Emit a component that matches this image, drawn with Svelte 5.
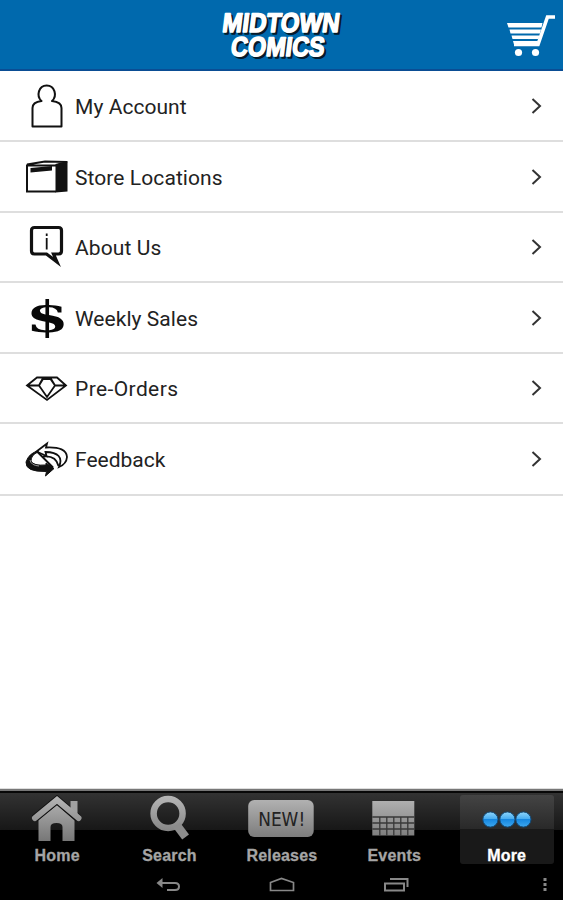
<script>
  const rows = [
    { label: 'My Account', icon: 'account', top: 71, h: 71, ls: 0.05 },
    { label: 'Store Locations', icon: 'store', top: 142, h: 71, ls: 0.08 },
    { label: 'About Us', icon: 'about', top: 213, h: 70, ls: 0.1 },
    { label: 'Weekly Sales', icon: 'sales', top: 283, h: 71, ls: 0.05 },
    { label: 'Pre-Orders', icon: 'orders', top: 353, h: 70, ls: 0.4 },
    { label: 'Feedback', icon: 'feedback', top: 424, h: 72, ls: 0 }
  ];
  const tabs = ['Home', 'Search', 'Releases', 'Events', 'More'];
</script>

<div class="screen">
  <header>
    <svg class="logo" width="200" height="69" viewBox="180 0 200 69" role="img" aria-label="Midtown Comics">
      <g class="shadow">
        <text transform="translate(223.500 33.500) skewX(-7) scale(.89 1)">MIDTOWN</text>
        <text transform="translate(232 57.500) skewX(-7) scale(.868 1)">COMICS</text>
      </g>
      <g class="face">
        <text transform="translate(221.500 32) skewX(-7) scale(.89 1)">MIDTOWN</text>
        <text transform="translate(230 56) skewX(-7) scale(.868 1)">COMICS</text>
      </g>
    </svg>
    <svg class="cart" width="73" height="69" viewBox="490 0 73 69">
      <g fill="#fff">
        <path d="M507 23h35.5l-1 4.5h-33zM509.5 29.5h31.500l-1 4h-29.500zM511.500 35.500h28l-1 3.500h-26zM513 41h25l-1 3.500h-23z" />
        <circle cx="518.500" cy="52.500" r="3.600" /><circle cx="535.500" cy="52.500" r="3.600" />
      </g>
      <path d="M555 17h-7.500L538 44.500H514" fill="none" stroke="#fff" stroke-width="3.600" />
    </svg>
  </header>

  <main>
    {#each rows as r}
      <div class="row" style:height="{r.h}px">
        <svg width="48" height="70" viewBox="22 {r.top} 48 70" fill="none" stroke="#111">
          {#if r.icon === 'account'}
            <path d="M41.500 101C36 96 38.500 85.500 46.700 85.500S57.500 96 52 101Q61.500 102 61.500 108V126.500H32.500V108Q32.500 102 41.500 101z" stroke-width="2" stroke-linejoin="round" />
          {:else if r.icon === 'store'}
            <path d="M27 164.500 45 161.500 67 162 56 165.500H27V191.500H56" stroke-width="2" />
            <path d="M55.500 164 67.500 161V191.500L55.500 192.500zM30.500 168 52 166V170.500L30.500 172.500z" fill="#111" stroke="none" />
          {:else if r.icon === 'about'}
            <path d="M34.500 228.500H58.500Q61.500 228.500 61.500 231.500V252Q61.500 255 58.500 255H53.500L57 263 46.500 255H34.500Q31.500 255 31.500 252V231.500Q31.500 228.500 34.500 228.500z" stroke-width="3.200" />
            <path d="M46.700 239V250.500M46.700 234.500V237" stroke-width="1.800" />
          {:else if r.icon === 'sales'}
            <text class="dollar" transform="translate(26 332) scale(1.430 1)">$</text>
          {:else if r.icon === 'orders'}
            <path d="M37 377.500H57L66 385.500 47 400 27 385.500zM27 385.500H39L43 378M66 385.500H55L50.500 378M39 385.500 47 397 55 385.500 50.500 379H43z" stroke-width="1.800" />
          {:else}
            <path d="M36.500 451.500 47 443.500 46 447.500Q66.500 446.500 67 457 66.500 464 59 467 65 452.500 45.500 452L46.500 456z" stroke-width="1.800" />
            <path d="M37 451.500 53 467.500M43 456.500Q56 455 58.500 466" stroke-width="1.800" />
            <path d="M38 452Q31 455 31 461 33 466 46 465V463L54 468.500 45.500 476 46.500 471.500Q25 472 26 462 29 453 38 451z" fill="#111" stroke-width="1" />
            <path d="M30 460Q31 465.500 39 466" stroke="#999" stroke-width="1" />
          {/if}
        </svg>
        <span class="label" style:letter-spacing="{r.ls}px">{r.label}</span>
        <svg class="chev" width="16" height="24" viewBox="0 0 16 24"><path d="M3.500 5 11 12 3.500 19" fill="none" stroke="#333" stroke-width="2" /></svg>
      </div>
    {/each}
  </main>

  <footer>
    <nav>
      {#each tabs as t, i}
        <div class="tab" class:active={t === 'More'}>
          <svg width="94" height="50" viewBox="{10.500 + i * 112.400} 795 94 50">
            <defs>
              <linearGradient id="metal{i}" x1="0" y1="797" x2="0" y2="841" gradientUnits="userSpaceOnUse">
                <stop offset="0" stop-color="#b5b5b5" /><stop offset="1" stop-color="#777" />
              </linearGradient>
              <linearGradient id="blue" x1="0" y1="0" x2="0" y2="1">
                <stop offset="0" stop-color="#8fd5fa" /><stop offset=".45" stop-color="#48adf0" /><stop offset=".5" stop-color="#1687e0" /><stop offset="1" stop-color="#3ea8ee" />
              </linearGradient>
            </defs>
            {#if t === 'Home'}
              <path d="M39 841V820L57.500 805 75 820V841H63V827Q63 823 57 823T51 827V841z" fill="url(#metal{i})" />
              <path d="M35 818.500 57.500 800 79 818.500" fill="none" stroke="#111" stroke-width="8" />
              <path d="M71 811V801H78V817z" fill="#a0a0a0" />
              <path d="M35.500 818 57.500 800 79 818" fill="none" stroke="url(#metal{i})" stroke-width="6" stroke-linecap="round" />
            {:else if t === 'Search'}
              <circle cx="168" cy="813.500" r="14.500" fill="none" stroke="url(#metal{i})" stroke-width="6.500" />
              <path d="M176.500 825 185.500 837" stroke="#8c8c8c" stroke-width="8.500" />
            {:else if t === 'Releases'}
              <rect x="248.500" y="800" width="65.500" height="37" rx="6" fill="url(#metal{i})" />
              <text class="new" x="258.500" y="826" textLength="47" lengthAdjust="spacingAndGlyphs">NEW!</text>
            {:else if t === 'Events'}
              <path d="M373 801H415V835.500H373z" fill="url(#metal{i})" />
              <path d="M373 817H415M373 823H415M373 829H415M380.500 817V836M387.500 817V836M394.500 817V836M401.500 817V836M408.500 817V836" stroke="#383838" stroke-width="1.300" />
            {:else}
              {#each [490.5, 507.5, 523.5] as x}
                <circle cx={x} cy="819.500" r="7.600" fill="url(#blue)" stroke="#124a78" stroke-width="1" />
              {/each}
            {/if}
          </svg>
          <span>{t}</span>
        </div>
      {/each}
    </nav>
    <svg class="system" width="563" height="32" viewBox="0 868 563 32" fill="none" stroke="#888" stroke-width="2">
      <path d="M161 883H175Q179 883 179 886.500T175 890H167" /><path d="M156.500 883 162.500 878V888z" fill="#888" stroke="none" />
      <path d="M270.500 882.500 281.500 878.500 293.500 882.500V890.500H270.500z" stroke-width="1.700" />
      <path d="M385 883.500H404V890.500H385zM390 879H407.500V887" />
      <path d="M543.500 878h3v3h-3zM543.500 883h3v3h-3zM543.500 888h3v3h-3z" fill="#888" stroke="none" />
    </svg>
  </footer>
</div>

<style>
  .screen { width: 563px; height: 900px; display: flex; flex-direction: column; background: #fff; overflow: hidden; font-family: Roboto, sans-serif; }
  header { box-sizing: border-box; height: 71px; flex: none; display: flex; background: #0069ad; border-bottom: 2px solid #0a4d94; }
  .logo { margin-left: 180px; overflow: visible; }
  .cart { margin-left: auto; }
  .logo text { font: 700 27px "Liberation Sans", sans-serif; stroke-width: 1.6px; stroke-linejoin: round; }
  .shadow { fill: #061a2b; stroke: #061a2b; }
  .face { fill: #fff; stroke: #fff; }
  main { flex: 1; }
  .row { box-sizing: border-box; display: flex; align-items: center; padding-left: 22px; border-bottom: 2px solid #dedede; }
  .row svg { flex: none; }
  .label { margin-left: 5px; font-size: 21px; line-height: 24px; color: #222; padding-top: 2px; white-space: nowrap; }
  .chev { margin-left: auto; margin-right: 18px; }
  .dollar { font: 700 43px "DejaVu Serif", serif; fill: #080808; stroke: none; }
  footer { box-sizing: border-box; height: 111px; flex: none; display: flex; flex-direction: column; background: linear-gradient(#343434, #171717 39px, #000 39px); border-top: 2px solid #777; box-shadow: 0 -1px #ddd, inset 0 2px #080808; }
  nav { height: 77px; display: flex; padding: 4px 9px 0 10px; gap: 18.100px; box-sizing: border-box; }
  .tab { width: 94.300px; height: 69px; display: flex; flex-direction: column; align-items: center; color: #a5a5a5; }
  .tab span { font: 700 16px/18px "Liberation Sans", sans-serif; margin-top: 2px; letter-spacing: .2px; -webkit-text-stroke: .3px; }
  .active { color: #fff; background: linear-gradient(#444, #292929 34px, #191919 34px); border-radius: 3px; }
  .tab svg, .system { flex: none; }
  .new { font: 400 19px "DejaVu Sans", sans-serif; fill: #222; }
</style>
